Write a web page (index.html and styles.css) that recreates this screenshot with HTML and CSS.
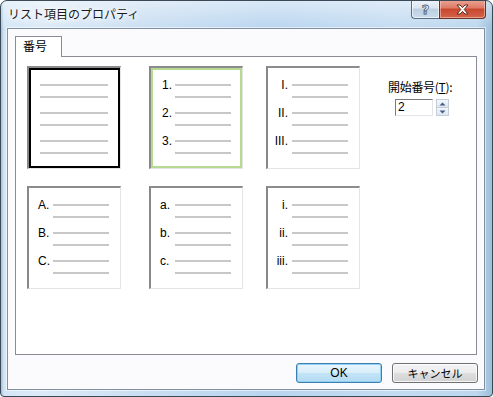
FILE: index.html
```html
<!DOCTYPE html>
<html lang="ja">
<head>
<meta charset="utf-8">
<title>リスト項目のプロパティ</title>
<link rel="stylesheet" href="styles.css">
</head>
<body>
<div class="window">
  <div class="titlebar">
    <span class="title">リスト項目のプロパティ</span>
    <div class="caption">
      <div class="cb help"><span class="q">?</span></div>
      <div class="cb close">
        <svg width="13" height="11" viewBox="0 0 13 11"><path d="M1 1 L4 1 L6.5 3.6 L9 1 L12 1 L8.2 5.5 L12 10 L9 10 L6.5 7.4 L4 10 L1 10 L4.8 5.5 Z" fill="#fff" stroke="#5a2b22" stroke-width="1" stroke-linejoin="round"/></svg>
      </div>
    </div>
  </div>
  <div class="client">
    <div class="tabs"><div class="tab">番号</div></div>
    <div class="panel">
      <div class="opts">
        <div class="opt"><div class="sel black">
          <div class="grp plain"><span class="ln"></span><span class="ln"></span></div>
          <div class="grp plain"><span class="ln"></span><span class="ln"></span></div>
          <div class="grp plain"><span class="ln"></span><span class="ln"></span></div>
        </div></div>
        <div class="opt"><div class="sel green">
          <div class="grp"><span class="lbl ar">1.</span><span class="ln"></span><span class="ln"></span></div>
          <div class="grp"><span class="lbl ar">2.</span><span class="ln"></span><span class="ln"></span></div>
          <div class="grp"><span class="lbl ar">3.</span><span class="ln"></span><span class="ln"></span></div>
        </div></div>
        <div class="opt"><div class="sel">
          <div class="grp"><span class="lbl rm">I.</span><span class="ln"></span><span class="ln"></span></div>
          <div class="grp"><span class="lbl rm">II.</span><span class="ln"></span><span class="ln"></span></div>
          <div class="grp"><span class="lbl rm">III.</span><span class="ln"></span><span class="ln"></span></div>
        </div></div>
        <div class="start">
          <div class="start-label">開始番号(<u>T</u>):</div>
          <div class="spin-row">
            <div class="input">2</div>
            <div class="spin">
              <div class="sb up"><svg width="7" height="4" viewBox="0 0 7 4"><path d="M0.5 3.5 L3.5 0.5 L6.5 3.5 Z" fill="#3f5d86"/></svg></div>
              <div class="sb down"><svg width="7" height="4" viewBox="0 0 7 4"><path d="M0.5 0.5 L3.5 3.5 L6.5 0.5 Z" fill="#3f5d86"/></svg></div>
            </div>
          </div>
        </div>
        <div class="opt"><div class="sel">
          <div class="grp"><span class="lbl al">A.</span><span class="ln"></span><span class="ln"></span></div>
          <div class="grp"><span class="lbl al">B.</span><span class="ln"></span><span class="ln"></span></div>
          <div class="grp"><span class="lbl al">C.</span><span class="ln"></span><span class="ln"></span></div>
        </div></div>
        <div class="opt"><div class="sel">
          <div class="grp"><span class="lbl al">a.</span><span class="ln"></span><span class="ln"></span></div>
          <div class="grp"><span class="lbl al">b.</span><span class="ln"></span><span class="ln"></span></div>
          <div class="grp"><span class="lbl al">c.</span><span class="ln"></span><span class="ln"></span></div>
        </div></div>
        <div class="opt"><div class="sel">
          <div class="grp"><span class="lbl rm">i.</span><span class="ln"></span><span class="ln"></span></div>
          <div class="grp"><span class="lbl rm">ii.</span><span class="ln"></span><span class="ln"></span></div>
          <div class="grp"><span class="lbl rm">iii.</span><span class="ln"></span><span class="ln"></span></div>
        </div></div>
      </div>
    </div>
    <div class="actions">
      <button class="btn default">OK</button>
      <button class="btn">キャンセル</button>
    </div>
  </div>
</div>
</body>
</html>
```

FILE: styles.css
```css
* { box-sizing: border-box; margin: 0; padding: 0; }
html, body { width: 493px; height: 397px; overflow: hidden; }
body {
  font-family: "Liberation Sans", "Noto Sans CJK JP", sans-serif;
  font-size: 12px;
  color: #000;
  background: #fff;
}
.window {
  width: 493px;
  height: 397px;
  border: 1px solid #3b4855;
  border-radius: 7px 7px 4px 4px;
  background:
    linear-gradient(180deg, rgba(255,255,255,0.45) 0px, rgba(255,255,255,0) 28px),
    linear-gradient(90deg, #9fc2dc 0px, #d4e6f6 3px, #dceaf7 8%, #c9def2 30%, #b9d5ef 55%, #c4dcf2 80%, #bcd7ee 97%, #9cbfd9 100%);
  display: flex;
  flex-direction: column;
  overflow: hidden;
}
.titlebar {
  height: 27px;
  flex: none;
  display: flex;
  justify-content: space-between;
  align-items: flex-start;
  padding: 0 6px 0 7px;
}
.title {
  font-family: "Noto Sans CJK JP", sans-serif;
  font-size: 12px;
  line-height: 26px;
  color: #1a1a1a;
  text-shadow: 0 0 4px #fff, 0 0 7px #fff, 0 0 10px #fff;
}
.caption { display: flex; height: 19px; margin-top: -1px; }
.cb {
  height: 19px;
  display: flex;
  align-items: center;
  justify-content: center;
  border: 1px solid #5a6e82;
  border-top: none;
}
.help {
  width: 28px;
  border-right: none;
  border-radius: 0 0 0 4px;
  background: linear-gradient(#edf3f9 0%, #dbe6f1 45%, #bccfe2 50%, #cbdcec 100%);
  box-shadow: inset 0 0 0 1px rgba(255,255,255,0.6);
}
.q {
  font-family: "DejaVu Sans", sans-serif;
  font-weight: bold;
  font-size: 13px;
  line-height: 13px;
  color: #fff;
  -webkit-text-stroke: 0.8px #4b5a6a;
  margin-top: 1px;
}
.close {
  width: 47px;
  border-color: #6b3026;
  border-radius: 0 0 4px 0;
  background: linear-gradient(#eba596 0%, #dd7a64 45%, #c9452d 50%, #d2664b 100%);
  box-shadow: inset 0 0 0 1px rgba(255,220,210,0.5);
}
.client {
  flex: 1;
  margin: 0 7px 6px 6px;
  border: 1px solid #8191a3;
  box-shadow: 0 0 0 1px rgba(255,255,255,0.55);
  background: #fbfafd;
  padding: 7px 7px 6px 7px;
  display: flex;
  flex-direction: column;
}
.tabs { display: flex; height: 20px; flex: none; }
.tab {
  position: relative;
  z-index: 1;
  height: 21px;
  padding: 0 14px 0 7px;
  border: 1px solid #898c95;
  border-bottom: none;
  background: #fff;
  font-family: "Noto Sans CJK JP", sans-serif;
  font-size: 12px;
  line-height: 18px;
}
.panel {
  height: 299px;
  flex: none;
  border: 1px solid #898c95;
  background: #fff;
}
.opts {
  display: grid;
  grid-template-columns: 122px 117px 122px auto;
  grid-template-rows: 103px 103px;
  row-gap: 17px;
  padding: 9px 0 0 11px;
}
.opt {
  width: 94px;
  height: 103px;
  border-style: solid;
  border-width: 2px 1px 1px 2px;
  border-color: #8c8c8c #e4e4e4 #e4e4e4 #888888;
  background: #fff;
}
.sel {
  height: 100%;
  border: 2px solid transparent;
  padding-top: 14px;
}
.sel.black { border-color: #000; }
.sel.green { border-color: #b6da90; }
.grp {
  display: grid;
  grid-template-columns: 22px 56px;
  grid-template-rows: 2px 2px;
  row-gap: 10px;
  margin-bottom: 14px;
}
.grp.plain { grid-template-columns: 9px 68px; }
.lbl {
  grid-row: 1;
  grid-column: 1;
  line-height: 2px;
  white-space: nowrap;
  font-size: 12px;
}
.lbl.ar { padding-left: 9px; }
.lbl.al { padding-left: 7px; }
.lbl.rm { text-align: right; padding-right: 4px; }
.ln { grid-column: 2; background: #c8c8c8; }
.start { padding-top: 13px; }
.start-label {
  font-family: "Noto Sans CJK JP", sans-serif;
  font-size: 12px;
  line-height: 16px;
  letter-spacing: -0.3px;
}
.spin-row { display: flex; gap: 3px; margin-top: 4px; padding-left: 7px; }
.input {
  width: 38px;
  height: 17px;
  border: 1px solid;
  border-color: #7a7a7a #e3e5ea #e3e5ea #7a7a7a;
  background: #fff;
  font-size: 12px;
  line-height: 15px;
  padding-left: 2px;
}
.spin { display: flex; flex-direction: column; width: 13px; height: 17px; }
.sb {
  flex: 1;
  display: flex;
  align-items: center;
  justify-content: center;
  border: 1px solid #c5cdd8;
  background: linear-gradient(#f4f7fb, #dde6f0);
}
.sb.down { border-top: none; }
.actions {
  display: flex;
  justify-content: flex-end;
  gap: 10px;
  margin-top: 8px;
  margin-right: -1px;
}
.btn {
  width: 86px;
  height: 20px;
  border: 1px solid #707070;
  border-radius: 3px;
  background: linear-gradient(#f3f3f3 0%, #ececec 50%, #dedede 51%, #d2d2d2 100%);
  box-shadow: inset 0 0 0 1px rgba(255,255,255,0.8);
  font-family: "Noto Sans CJK JP", sans-serif;
  font-size: 11px;
  line-height: 16px;
  color: #000;
}
.btn.default {
  border-color: #3c7fb1;
  background: linear-gradient(#e9f5fc 0%, #d8eefb 50%, #c3e4f7 51%, #b3dbf3 100%);
  box-shadow: inset 0 0 0 1px #8fd0f1;
  font-family: "Liberation Sans", sans-serif;
  font-size: 12px;
}
```
